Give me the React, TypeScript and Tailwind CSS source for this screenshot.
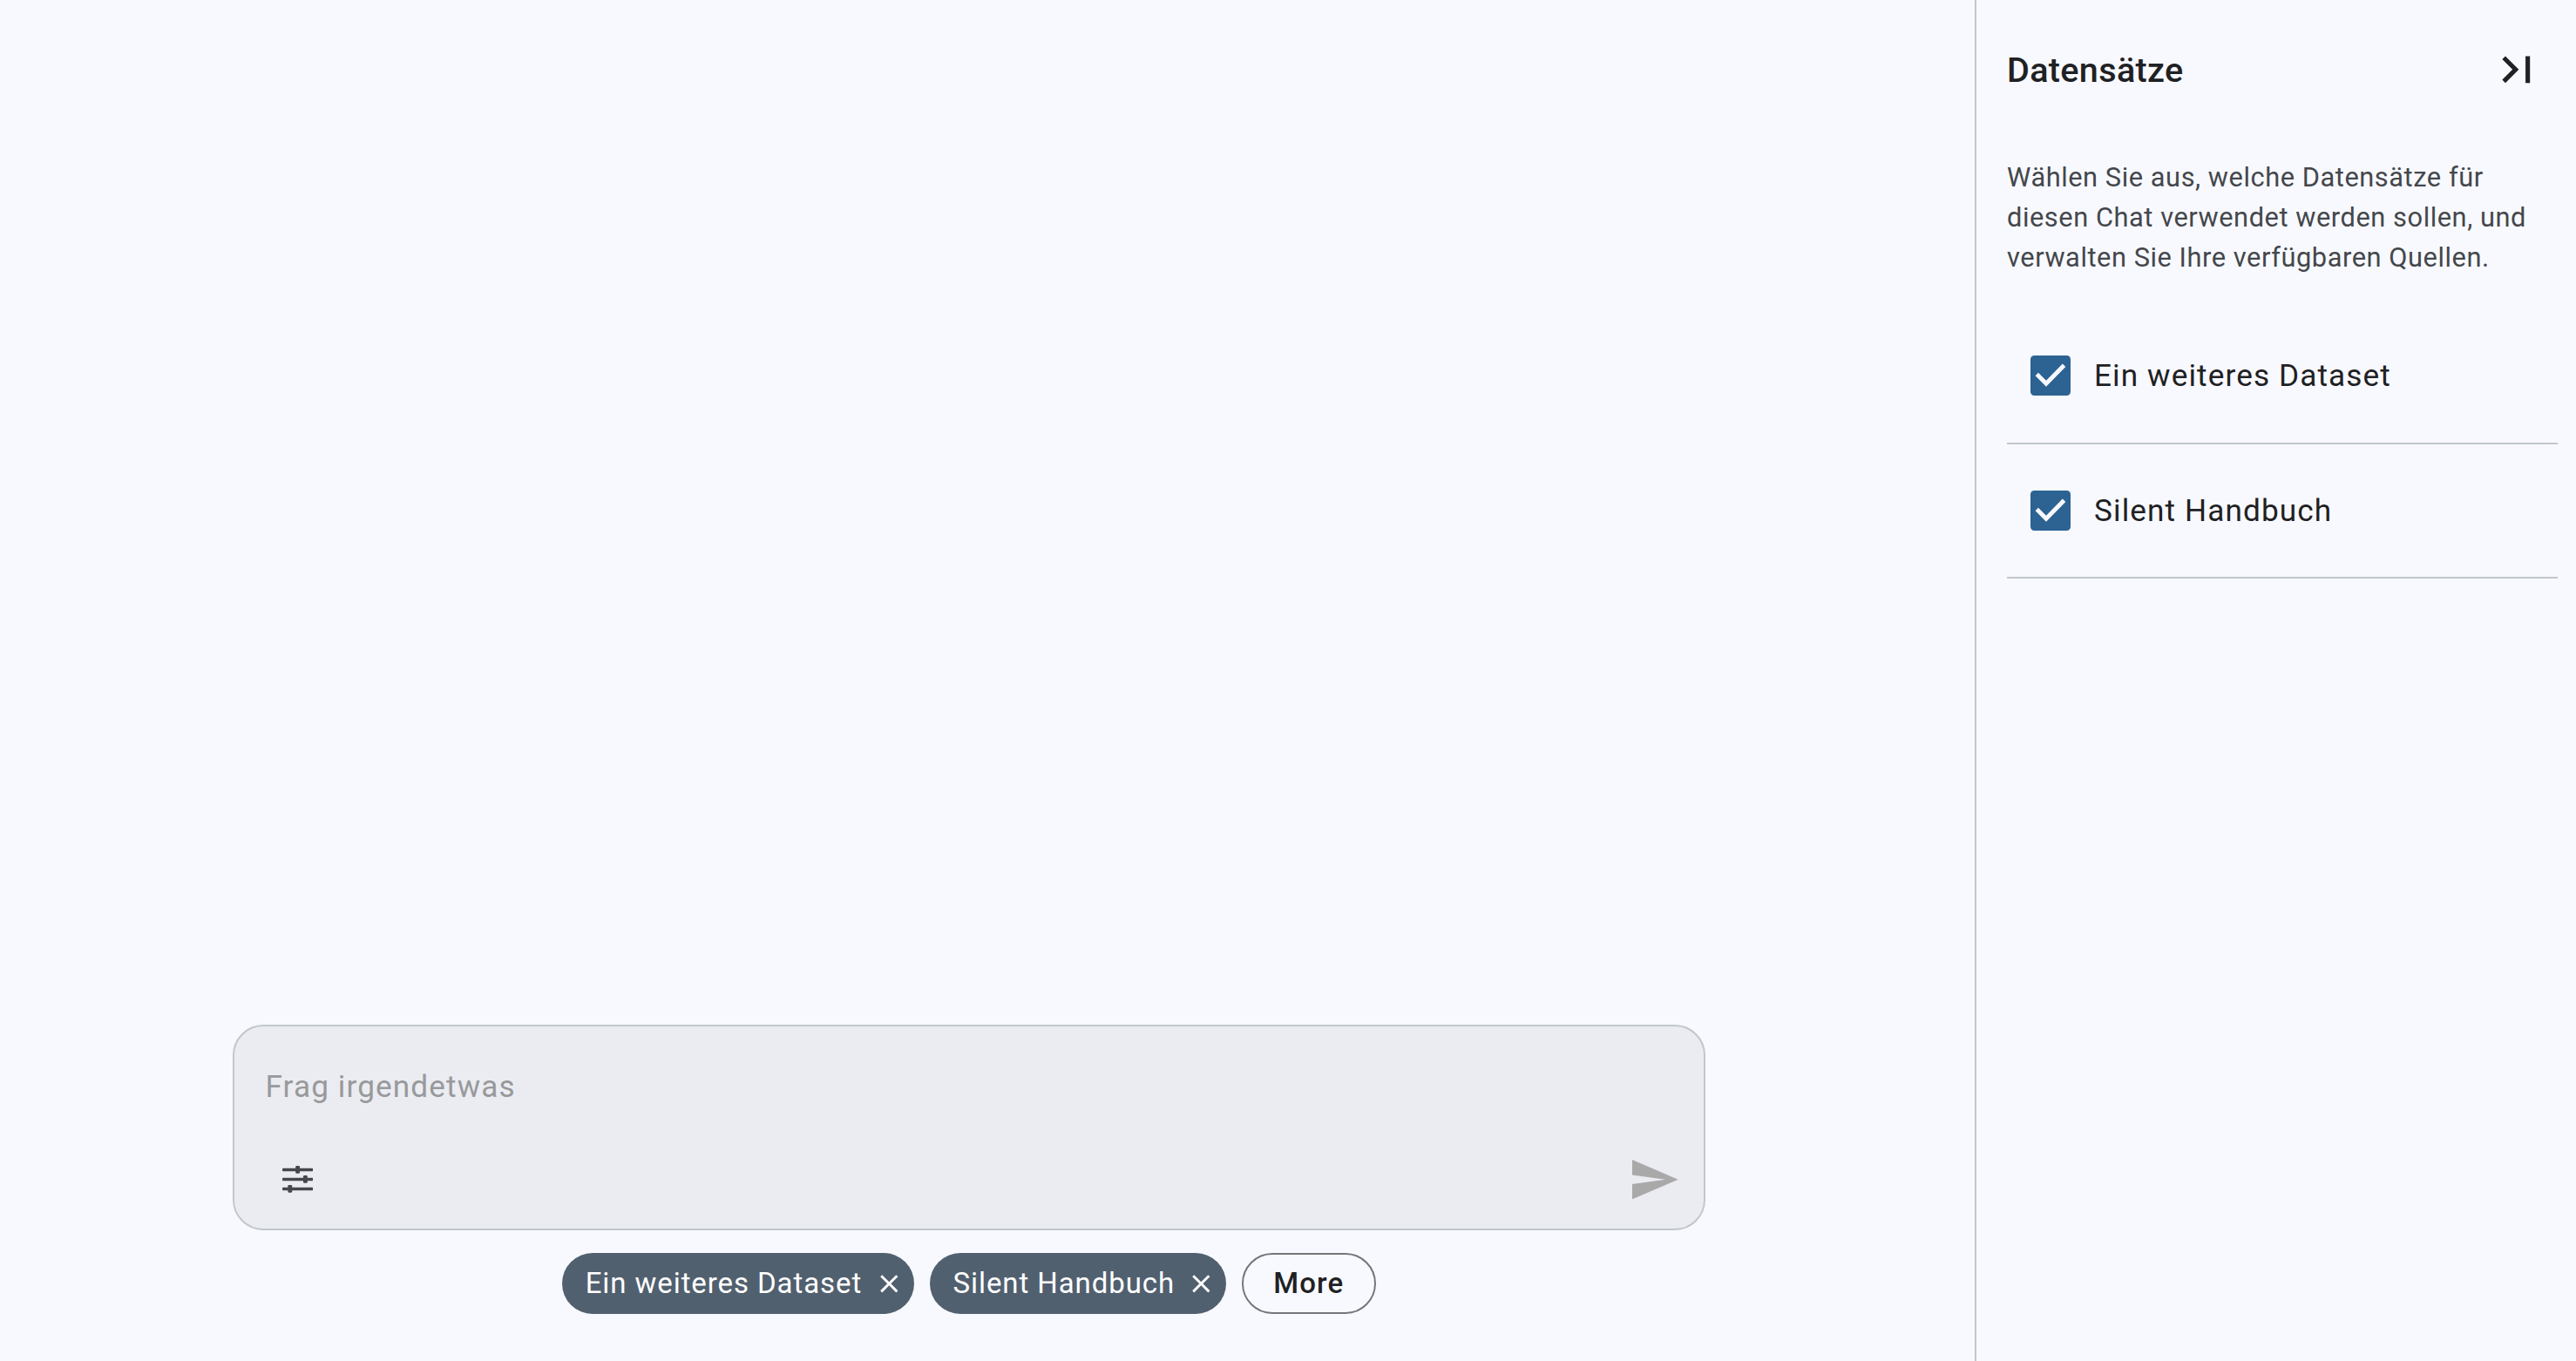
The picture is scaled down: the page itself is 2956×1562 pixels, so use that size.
type Dataset = { name: string; rowHeight: string; chipWidth: string };

const datasets: Dataset[] = [
  { name: "Ein weiteres Dataset", rowHeight: "h-[156px]", chipWidth: "w-[404px]" },
  { name: "Silent Handbuch", rowHeight: "h-[154px]", chipWidth: "w-[340px]" },
];

function LastPageIcon() {
  return (
    <svg viewBox="0 0 24 24" className="size-[61.6px]" fill="currentColor">
      <path d="M5.59 7.41 10.18 12l-4.59 4.59L7 18l6-6-6-6zM16 6h2v12h-2z" />
    </svg>
  );
}

function CloseIcon() {
  return (
    <svg viewBox="0 0 24 24" className="mt-px size-[34.6px] shrink-0" fill="currentColor">
      <path d="M19 6.41 17.59 5 12 10.59 6.41 5 5 6.41 10.59 12 5 17.59 6.41 19 12 13.41 17.59 19 19 17.59 13.41 12z" />
    </svg>
  );
}

function TuneIcon() {
  return (
    <svg viewBox="0 0 16 14" className="h-[30.8px] w-[35.2px]" fill="currentColor">
      <rect x="0" y="1.3" width="16" height="1.5" rx="0.4" />
      <rect x="0" y="6.3" width="16" height="1.5" rx="0.4" />
      <rect x="0" y="11.3" width="16" height="1.5" rx="0.4" />
      <rect x="6.9" y="0" width="2.2" height="4" rx="0.6" />
      <rect x="10.9" y="5" width="2.2" height="4" rx="0.6" />
      <rect x="2.9" y="10" width="2.2" height="4" rx="0.6" />
    </svg>
  );
}

function SendIcon() {
  return (
    <svg viewBox="0 0 52.7 45.4" className="h-[45.4px] w-[52.7px]" fill="currentColor">
      <path d="M0 0 52.7 22.7 0 45.4V28L38 22.7 0 17.6z" />
    </svg>
  );
}

function Checkbox() {
  return (
    <span className="block size-[45.7px] shrink-0 rounded-[4.4px] bg-[#2c6393] text-[#f8f9ff]">
      <svg viewBox="0 0 45.7 45.7" className="size-full" fill="currentColor">
        <path d="M5.6 23.2 9 19.8 18 28.8 36.8 9.6 40.3 13 18 35.8z" />
      </svg>
    </span>
  );
}

function Chip({ label, width }: { label: string; width: string }) {
  return (
    <button
      className={`flex h-[70px] items-center justify-between rounded-full bg-[#51606f] pr-[11.4px] pl-[26.4px] text-[33px] tracking-[0.92px] whitespace-nowrap text-white ${width}`}
    >
      <span>{label}</span>
      <CloseIcon />
    </button>
  );
}

export default function App() {
  return (
    <div className="flex h-screen w-full overflow-hidden bg-[#f8f9ff] font-['Roboto',sans-serif] text-[#1f2123]">
      <main className="flex min-w-0 flex-1 flex-col items-center justify-end pr-[42px] pb-[54px]">
        <section className="flex h-[236px] w-[1690px] flex-col justify-between rounded-[35px] border-2 border-[#c0c7cc] bg-[#ebecf1] pt-[43px] pr-[29px] pb-[34px] pl-[35.5px]">
          <p className="text-[35.2px] leading-[53px] tracking-[1.1px] text-[#98999c]">Frag irgendetwas</p>
          <div className="flex items-center justify-between">
            <button className="ml-[19px] text-[#44474b]">
              <TuneIcon />
            </button>
            <button className="text-[#a9a9aa]">
              <SendIcon />
            </button>
          </div>
        </section>
        <div className="mt-[26px] flex gap-[17.8px]">
          {datasets.map((d) => (
            <Chip key={d.name} label={d.name} width={d.chipWidth} />
          ))}
          <button className="flex h-[70px] w-[153.8px] items-center justify-center rounded-full border-2 border-[#72777b] text-[33px] font-medium tracking-[1.1px]">
            More
          </button>
        </div>
      </main>

      <aside className="flex w-[690px] flex-col border-l-2 border-[#c0c7cc] pr-[21px] pl-[35px]">
        <header className="flex h-[160px] items-center justify-between pr-[16.4px]">
          <h2 className="pt-[2px] text-[39.6px] font-medium tracking-[0.33px]">Datensätze</h2>
          <button>
            <LastPageIcon />
          </button>
        </header>
        <p className="mt-[21px] text-[30.8px] leading-[46px] tracking-[0.55px] whitespace-nowrap text-[#44474b]">
          Wählen Sie aus, welche Datensätze für
          <br />
          diesen Chat verwendet werden sollen, und
          <br />
          verwalten Sie Ihre verfügbaren Quellen.
        </p>
        <ul className="mt-[35px]">
          {datasets.map((d) => (
            <li
              key={d.name}
              className={`flex items-center gap-[27px] border-b-2 border-[#c0c7cc] pl-[27.3px] text-[35.2px] tracking-[1.1px] ${d.rowHeight}`}
            >
              <Checkbox />
              <span>{d.name}</span>
            </li>
          ))}
        </ul>
      </aside>
    </div>
  );
}
